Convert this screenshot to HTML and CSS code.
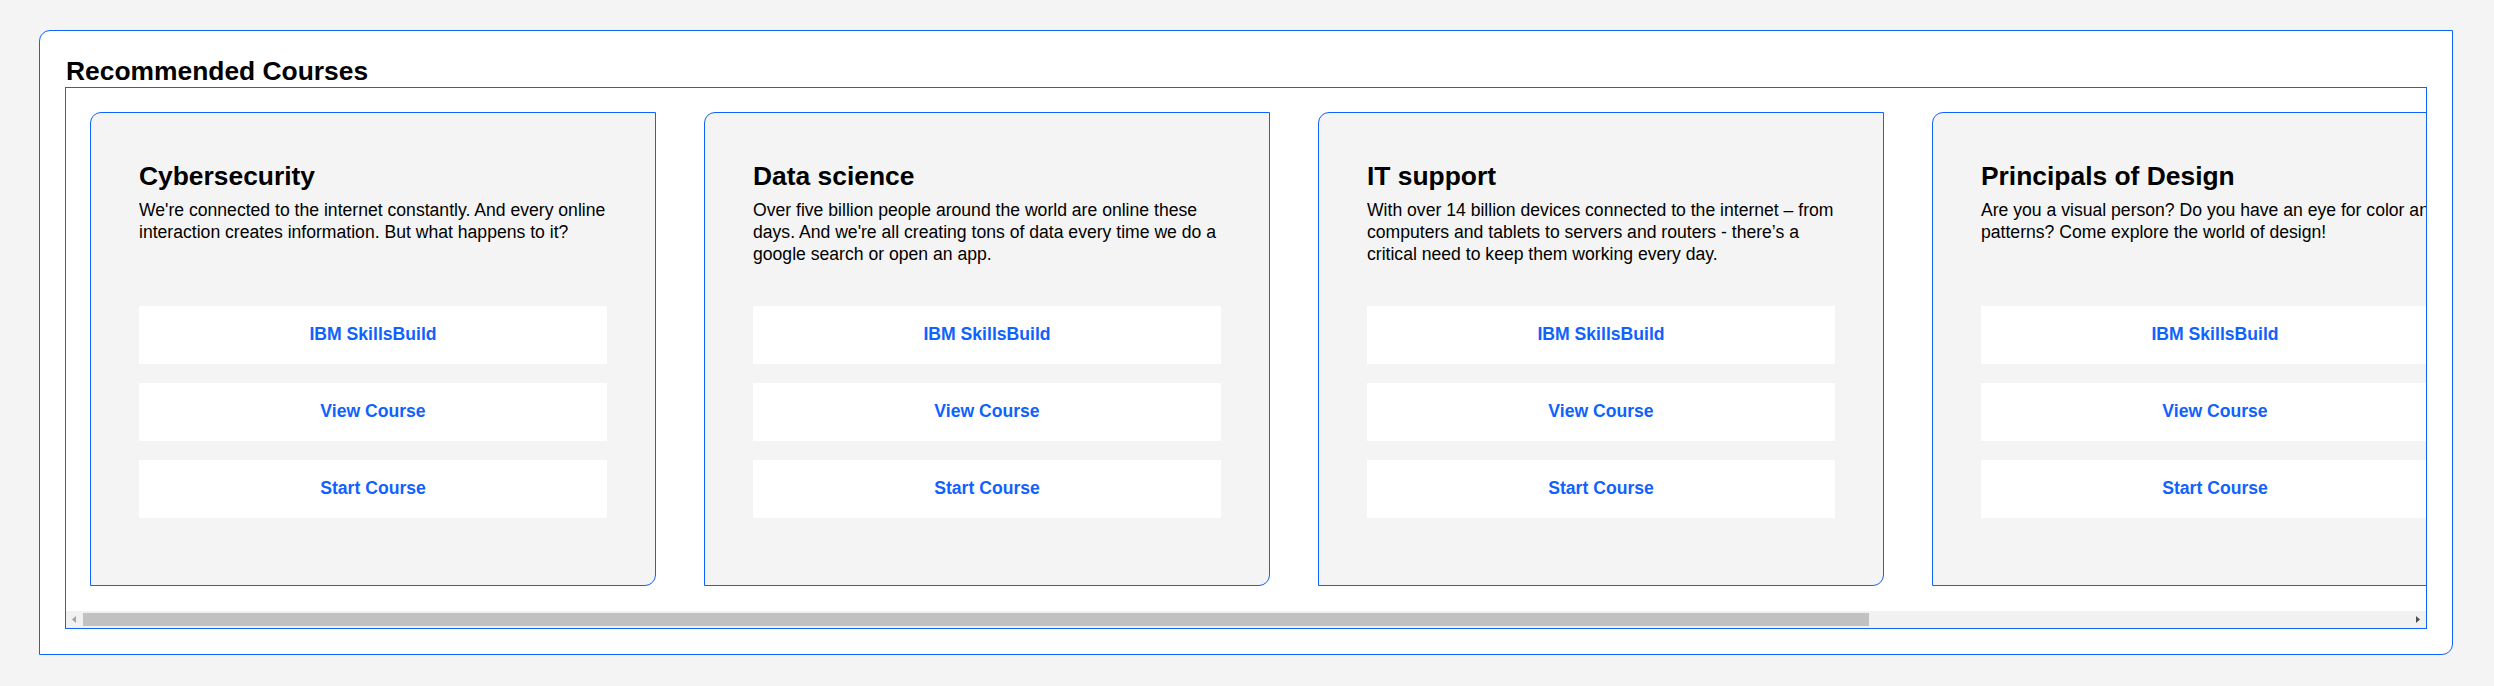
FILE: index.html
```html
<!DOCTYPE html>
<html lang="en">
<head>
<meta charset="utf-8">
<title>Recommended Courses</title>
<link rel="stylesheet" href="styles.css">
</head>
<body>
<div class="page">
  <section class="panel">
    <h2 class="panel-title">Recommended Courses</h2>
    <div class="scroll-frame">
      <div class="scroller">
        <article class="card">
          <h3 class="card-title">Cybersecurity</h3>
          <p class="card-text">We're connected to the internet constantly. And every online interaction creates information. But what happens to it?</p>
          <div class="actions">
            <a class="btn" href="#">IBM SkillsBuild</a>
            <a class="btn" href="#">View Course</a>
            <a class="btn" href="#">Start Course</a>
          </div>
        </article>
        <article class="card">
          <h3 class="card-title">Data science</h3>
          <p class="card-text">Over five billion people around the world are online these days. And we're all creating tons of data every time we do a google search or open an app.</p>
          <div class="actions">
            <a class="btn" href="#">IBM SkillsBuild</a>
            <a class="btn" href="#">View Course</a>
            <a class="btn" href="#">Start Course</a>
          </div>
        </article>
        <article class="card">
          <h3 class="card-title">IT support</h3>
          <p class="card-text">With over 14 billion devices connected to the internet – from computers and tablets to servers and routers - there’s a critical need to keep them working every day.</p>
          <div class="actions">
            <a class="btn" href="#">IBM SkillsBuild</a>
            <a class="btn" href="#">View Course</a>
            <a class="btn" href="#">Start Course</a>
          </div>
        </article>
        <article class="card">
          <h3 class="card-title">Principals of Design</h3>
          <p class="card-text">Are you a visual person? Do you have an eye for color and patterns? Come explore the world of design!</p>
          <div class="actions">
            <a class="btn" href="#">IBM SkillsBuild</a>
            <a class="btn" href="#">View Course</a>
            <a class="btn" href="#">Start Course</a>
          </div>
        </article>
        <article class="card">
          <h3 class="card-title">Artificial intelligence</h3>
          <p class="card-text">AI is changing the way we live and work. Learn how machines learn, and how you can put them to work.</p>
          <div class="actions">
            <a class="btn" href="#">IBM SkillsBuild</a>
            <a class="btn" href="#">View Course</a>
            <a class="btn" href="#">Start Course</a>
          </div>
        </article>
      </div>
      <div class="scrollbar">
        <span class="sb-btn">
          <svg width="17" height="17" viewBox="0 0 17 17"><polygon points="10,5 6,8.5 10,12" fill="#a3a3a3"/></svg>
        </span>
        <div class="sb-track">
          <div class="sb-thumb" style="width: 76.8%"></div>
        </div>
        <span class="sb-btn">
          <svg width="17" height="17" viewBox="0 0 17 17"><polygon points="7,5 11,8.5 7,12" fill="#505050"/></svg>
        </span>
      </div>
    </div>
  </section>
</div>
</body>
</html>
```

FILE: styles.css
```css
html, body {
  margin: 0;
  padding: 0;
  background: #f4f4f4;
}

body {
  font-family: "Liberation Sans", Arial, Helvetica, sans-serif;
  color: #000;
}

.page {
  padding: 30px 41px 34px 39px;
}

.panel {
  background: #fff;
  border: 1px solid #0f62fe;
  border-radius: 11px 0 11px 0;
  padding: 25px;
}

.panel-title {
  margin: 0;
  font-size: 26.4px;
  font-weight: 700;
  line-height: normal;
  padding-left: 1px;
}

.scroll-frame {
  border: 1px solid #0f62fe;
  display: flex;
  flex-direction: column;
}

.scroller {
  display: flex;
  gap: 48px;
  overflow: hidden;
  padding: 24px 24px 25px 24px;
}

.scrollbar {
  display: flex;
  height: 17px;
  background: #f1f1f1;
}

.sb-btn {
  flex: 0 0 17px;
  height: 17px;
  display: block;
}

.sb-btn svg {
  display: block;
}

.sb-track {
  flex: 1;
  display: flex;
  padding: 2px 0;
}

.sb-thumb {
  height: 13px;
  background: #c1c1c1;
}

.card {
  flex: 0 0 566px;
  box-sizing: border-box;
  height: 474px;
  display: flex;
  flex-direction: column;
  background: #f4f4f4;
  border: 1px solid #0f62fe;
  border-radius: 11px 0 11px 0;
  padding: 48px;
}

.card-title {
  margin: 0 0 7px 0;
  font-size: 26.4px;
  font-weight: 700;
  line-height: normal;
}

.card-text {
  margin: 0 -8px 0 0;
  font-size: 17.6px;
  line-height: 22px;
}

.actions {
  margin-top: auto;
  display: flex;
  flex-direction: column;
}

.btn {
  display: flex;
  align-items: center;
  justify-content: center;
  height: 57.5px;
  margin-bottom: 19.5px;
  background: #fff;
  color: #0f62fe;
  font-size: 17.6px;
  font-weight: 700;
  text-decoration: none;
  box-sizing: border-box;
}
```
